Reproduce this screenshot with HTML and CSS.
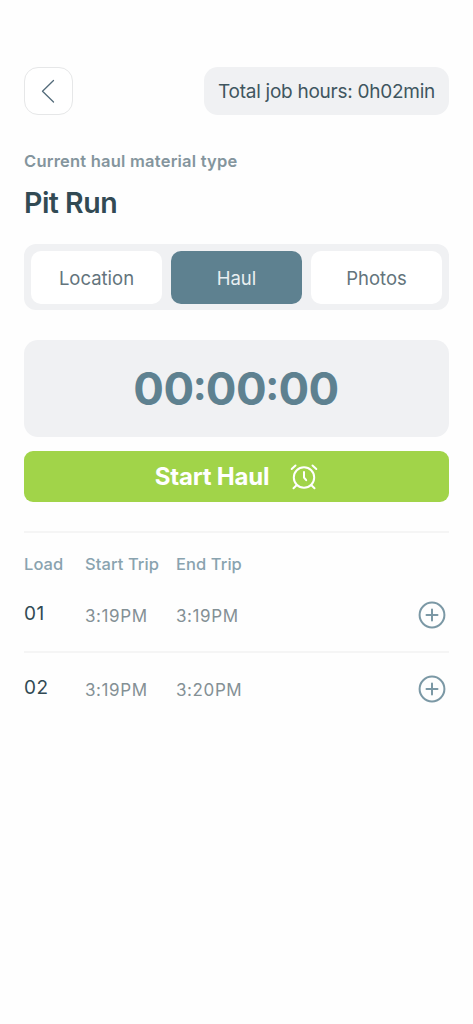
FILE: index.html
```html
<!DOCTYPE html>
<html lang="en">
<head>
<meta charset="utf-8">
<meta name="viewport" content="width=device-width, initial-scale=1">
<title>Haul</title>
<link rel="stylesheet" href="styles.css">
</head>
<body>
<main class="screen">
  <header class="topbar">
    <button class="back" aria-label="Back">
      <svg width="14" height="24" viewBox="0 0 14 24"><path d="M12.500 1.500 1.500 12.300l11 10.700"/></svg>
    </button>
    <div class="total"><span>Total job hours: 0h02min</span></div>
  </header>
  <p class="label"><span>Current haul material type</span></p>
  <h1 class="material"><span>Pit Run</span></h1>
  <nav class="tabs">
    <button class="tab"><span>Location</span></button>
    <button class="tab active"><span>Haul</span></button>
    <button class="tab"><span>Photos</span></button>
  </nav>
  <div class="timer"><span>00<span class="colon">:</span>00<span class="colon">:</span>00</span></div>
  <button class="start">
    <span>Start Haul</span>
    <svg width="28" height="28" viewBox="0 0 28 28"><circle cx="14" cy="14.500" r="10.200"/><path d="M14 9v5.500l2.200 2.700M1.700 6 5.500 2.500M22.500 2.500l3.800 3.500M6.800 22l-3.300 3.300M21.200 22l3.300 3.300"/></svg>
  </button>
  <section class="loads">
    <div class="row head"><span>Load</span><span class="start-head">Start Trip</span><span>End Trip</span></div>
    <div class="row">
      <span class="num">01</span><span class="time">3:19PM</span><span class="time">3:19PM</span>
      <button class="add" aria-label="Add"><svg width="28" height="28" viewBox="0 0 28 28"><circle cx="14" cy="14" r="12.400"/><path d="M14 8.500v11M8.500 14h11"/></svg></button>
    </div>
    <div class="row second">
      <span class="num">02</span><span class="time">3:19PM</span><span class="time">3:20PM</span>
      <button class="add" aria-label="Add"><svg width="28" height="28" viewBox="0 0 28 28"><circle cx="14" cy="14" r="12.400"/><path d="M14 8.500v11M8.500 14h11"/></svg></button>
    </div>
  </section>
</main>
</body>
</html>
```
FILE: styles.css
```css
* { box-sizing: border-box; margin: 0; padding: 0; }
body { background: #fefefe; font-family: Inter, "Liberation Sans", sans-serif; color: #324a54; }
button { border: 0; background: none; font: inherit; color: inherit; }
svg { display: block; fill: none; stroke: currentColor; stroke-linecap: round; stroke-linejoin: round; }
span { white-space: nowrap; }
.screen { width: 473px; height: 1024px; padding: 67px 24px 0; }
.topbar { display: flex; justify-content: space-between; height: 48px; }
.back { width: 49px; height: 48px; padding-right: 2px; border: 1px solid #e6e7e8; border-radius: 14px; display: grid; place-items: center; background: #fff; color: #536b7a; }
.back svg { stroke-width: 1.3; }
.total { width: 245px; border-radius: 14px; background: #f0f1f3; display: grid; place-items: center; font-size: 19px; letter-spacing: -.26px; color: #3f565f; }
.label { margin-top: 34px; height: 24px; line-height: 24px; font-size: 16.5px; font-weight: 600; letter-spacing: .22px; color: #84959d; }
.material { margin-top: 10px; height: 40px; line-height: 40px; font-size: 28.5px; font-weight: 600; letter-spacing: -.5px; }
.tabs { margin-top: 21px; height: 66px; padding: 7px; border-radius: 12px; background: #f0f1f3; display: grid; grid-template-columns: repeat(3, 1fr); gap: 9px; }
.tab { border-radius: 10px; background: #fff; height: 53px; font-size: 18.5px; color: #63747c; }
.tab.active { background: #5e8190; color: #e9eff1; }
.timer { margin-top: 30px; height: 97px; border-radius: 14px; background: #f0f1f3; display: grid; place-items: center; padding-right: 1px; font-size: 45.5px; line-height: 56px; font-weight: 700; letter-spacing: -.5px; color: #5e8190; }
.colon { display: inline-block; width: 12.200px; font-size: 42px; line-height: 40px; letter-spacing: 0; text-indent: -1px; vertical-align: 5px; }
.start { margin-top: 14px; width: 100%; height: 51px; border-radius: 9px; background: #a1d449; color: #fff; display: flex; align-items: center; justify-content: center; gap: 21px; font-size: 24px; font-weight: 700; letter-spacing: -.2px; }
.start svg { stroke-width: 2; }
.loads { margin-top: 29px; border-top: 2px solid #f5f5f5; }
.row { display: grid; grid-template-columns: 61px 91px 1fr 34px; align-items: center; height: 72px; }
.row.head { height: 46px; padding-top: 16px; font-size: 16.5px; font-weight: 500; letter-spacing: .08px; color: #89a3af; }
.row.second { border-top: 2px solid #f5f5f5; height: 74px; }
.num { font-size: 19px; letter-spacing: .5px; padding-bottom: 4px; }
.time { font-size: 17px; letter-spacing: .6px; padding-top: 1px; color: #849095; }
.add { color: #7b98a5; width: 34px; display: grid; place-items: center; }
.add svg { stroke-width: 2; }
```
